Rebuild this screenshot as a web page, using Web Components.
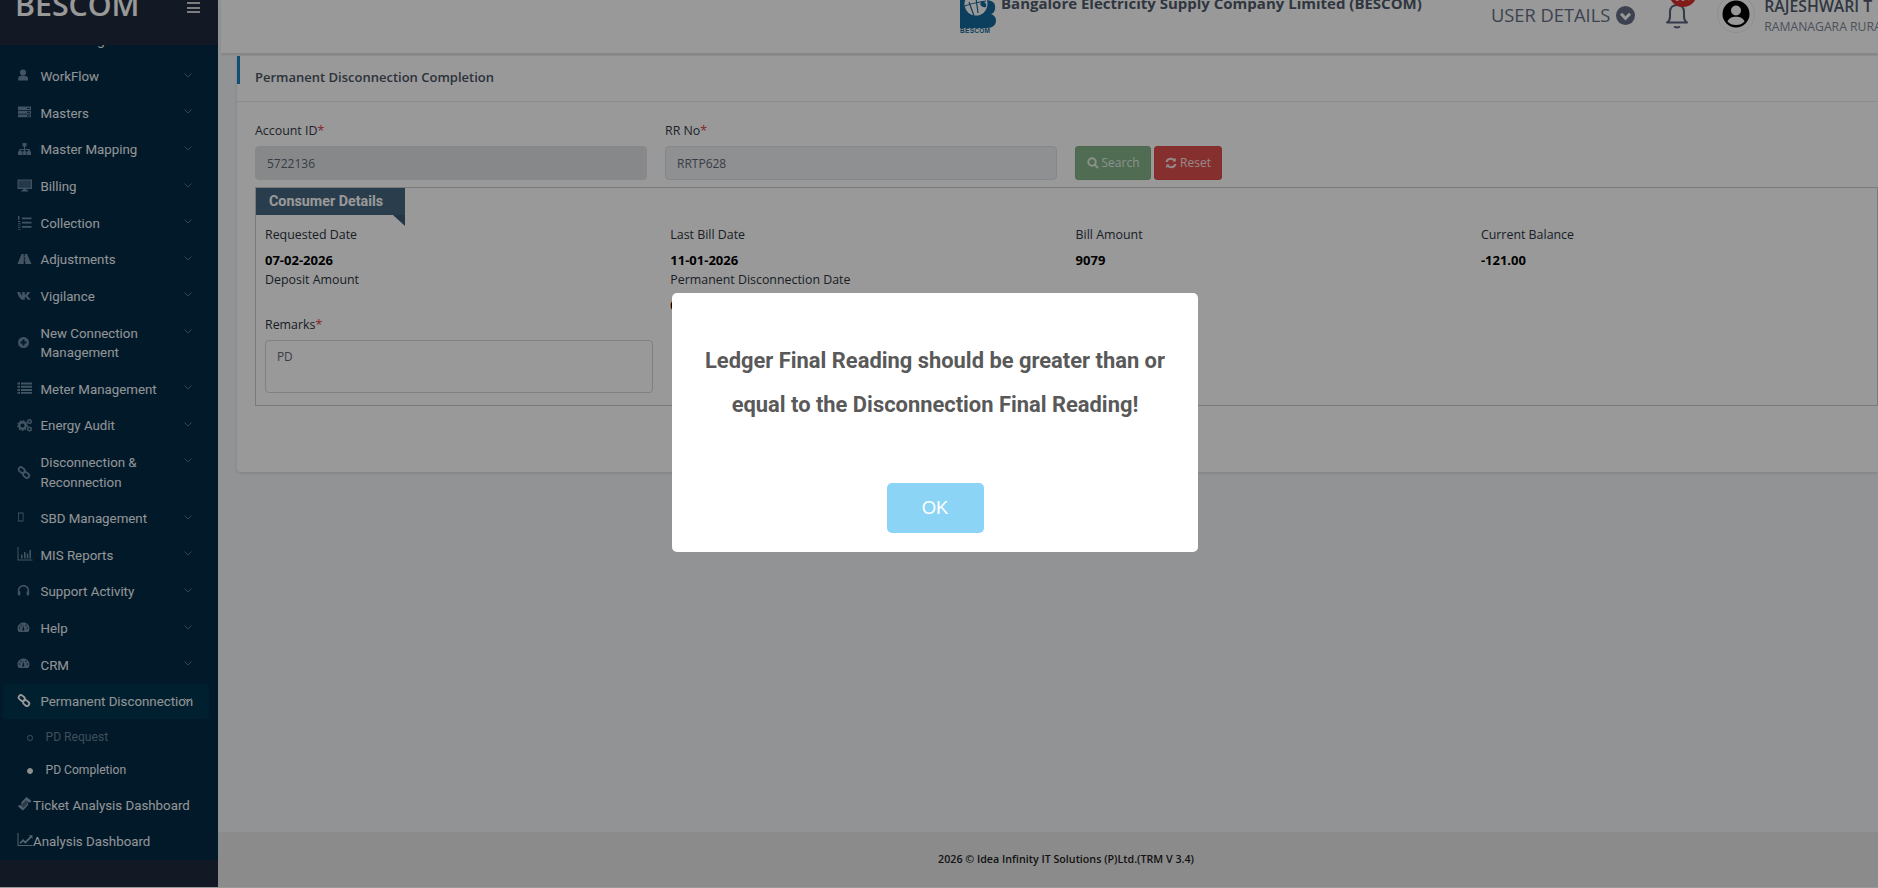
<!DOCTYPE html>
<html lang="en"><head><meta charset="utf-8"><title>Permanent Disconnection Completion</title>
<style>
html,body{margin:0;padding:0;height:100%;overflow:hidden;background:#fff}
body{font-family:"Open Sans","Liberation Sans",sans-serif}
</style></head><body>
<app-shell>
  <side-nav slot="nav"></side-nav>
  <top-bar slot="top"></top-bar>
  <page-card slot="page"></page-card>
  <page-footer slot="footer"></page-footer>
</app-shell>
<alert-modal>Ledger Final Reading should be greater than or equal to the Disconnection Final Reading!</alert-modal>
<script>
const ICONS={
user:'<path d="M6 .5a3.100 3.100 0 1 1 0 6.200A3.100 3.100 0 0 1 6 .5zM1.200 11.500V9.300c0-1.500 1-2.400 2.300-2.400h5C10 6.900 11 7.800 11 9.300v2.200z"/>',
server:'<path d="M1 1.500h13v3.400H1zM1 5.700h13v3H1zM1 9.500h13v2.700H1z" fill-rule="evenodd"/><path d="M10 2.700h3v1h-3zM10 6.700h3v1h-3zM10 10.400h3v1h-3z" fill="#022a45"/>',
sitemap:'<path d="M5.500 1h4v3.500H8v2.500h4.800v2.200h1.200V13h-4V9.200h1.300V8H8v1.200h1.500V13h-4V9.200H7V8H3.700v1.200H5V13H1V9.200h1.300V7H7V4.500H5.500z"/>',
desktop:'<path d="M.500 .500h14.500v9.500H9.500v1.200h1.700v1.300H4.300v-1.300H6V10H.500zM1.700 1.700v6.900h12V1.700z" fill-rule="evenodd"/><path d="M1.700 1.700h12v6.900h-12z" opacity=".55"/>',
listol:'<path d="M5 2.500h9.500v1.800H5zM5 6.700h9.500v1.800H5zM5 10.900h9.500v1.800H5zM1 1h1.400v3.800H1zM1 6h2.500v1H1zM1 8.300h2.500v1H1zM1 10.500h2.500v.8H1zM1 12.300h2.500v.8H1zM1 14h2.500v.8H1z"/>',
road:'<path d="M4.500 2h2.200v2.500h1V2H10l4.500 10H8.200V8.500H6.700V12H.5zM6.700 5.500v2h1.500v-2z" fill-rule="evenodd"/>',
vk:'<path d="M.300 4h2.800c.6 2 1.500 3.400 2.100 3.800V4h2.600v2.900C8.500 6.700 9.500 5.500 10.300 4H13c-.5 1.500-1.600 3-2.700 3.900 1.200.7 2.400 2 3.400 3.900h-3C10 10.300 9 9.300 7.800 9.100v2.700H6.500C3.500 11.800 1 8.500.300 4z"/>',
plus:'<path d="M6.500 2a5.500 5.500 0 1 1 0 11 5.500 5.500 0 0 1 0-11zM5.500 4.500v2H3.500v2h2v2h2v-2h2v-2h-2v-2z" fill-rule="evenodd"/>',
list:'<path d="M.500 1.500h2.500v2H.500zM4 1.500h11v2H4zM.500 4.700h2.500v2H.500zM4 4.700h11v2H4zM.500 7.900h2.500v2H.500zM4 7.900h11v2H4zM.500 11.100h2.500v1.600H.500zM4 11.100h11v1.600H4z"/>',
cogs:'<circle cx="5.500" cy="7.500" r="3.300" fill="none" stroke="currentColor" stroke-width="2.400"/><circle cx="5.500" cy="7.500" r="4.800" fill="none" stroke="currentColor" stroke-width="1.200" stroke-dasharray="1.600 1.600"/><circle cx="12.500" cy="3.500" r="1.800" fill="none" stroke="currentColor" stroke-width="1.400"/><circle cx="12.500" cy="11" r="1.800" fill="none" stroke="currentColor" stroke-width="1.400"/>',
chain:'<g fill="none" stroke="currentColor" stroke-width="1.800"><rect x="1.500" y="2.800" width="6.500" height="4.500" rx="2.200" transform="rotate(40 4.700 5)"/><rect x="6" y="7.800" width="6.500" height="4.500" rx="2.200" transform="rotate(40 9.200 10)"/></g>',
mobile:'<path d="M1 1.500h5.500v9H1zM1.800 2.500v7h3.900v-7z" fill-rule="evenodd"/>',
bar:'<path d="M.500 0h1v12.500h14v1H.500zM4 7.500h1.600v4H4zM7 5h1.600v6.500H7zM9.700 6.500h1.600v5H9.700zM12.400 3H14v8.500h-1.600z"/>',
head:'<path d="M6.500 1c3.300 0 5.700 2.400 5.700 5.700v3.300c0 .8-.5 1.500-1.500 1.500H9.700V7.200h1.100C10.600 4.500 8.900 2.500 6.500 2.500S2.400 4.500 2.200 7.200h1.100v4.300H2.300C1.300 11.500.800 10.800.800 10V6.700C.800 3.400 3.200 1 6.500 1z"/>',
gauge:'<path d="M6.500 1.500c3.300 0 6 2.600 6 5.800 0 1.400-.5 2.700-1.300 3.700H1.800C1 10 .500 8.700.500 7.300c0-3.200 2.700-5.800 6-5.800zM6.100 4 5.600 7.800c-.5.400-.5 1-.2 1.500.4.400 1 .5 1.500.2.500-.4.600-1 .2-1.500z" fill-rule="evenodd"/><circle cx="2.700" cy="7" r=".7" fill="#022a45"/><circle cx="10.300" cy="7" r=".7" fill="#022a45"/><circle cx="4" cy="4.300" r=".7" fill="#022a45"/><circle cx="9" cy="4.300" r=".7" fill="#022a45"/>',
ticket:'<path d="M9.500 1 14.500 5l-1.300 1.500c-.7-.4-1.500-.3-2 .3-.5.600-.4 1.400.1 2L6 14.500 1 10.500l1.200-1.600c.7.500 1.600.4 2.100-.3.500-.6.500-1.500-.1-2z"/><path d="M8.900 4 11.700 6.300 6.600 11.900 3.800 9.600z" fill="#022a45" opacity=".5"/>',
line:'<path d="M.500 1h1v12h14v1H.500zM2.500 11 6 7l2.300 2.200L13 4.500l-1.200-1.200H15.500V7l-1.200-1.200-6 6-2.300-2.300-2.500 2.500z"/>'
};
const ico=(n,s)=>`<svg width="${s||16}" height="${s||16}" viewBox="0 0 16 16" fill="currentColor" aria-hidden="true">${ICONS[n]}</svg>`;
function def(name,css,html){
  customElements.define(name,class extends HTMLElement{
    connectedCallback(){
      if(this.shadowRoot)return;
      this.attachShadow({mode:'open'}).innerHTML=`<style>${css}</style>`+(typeof html==='function'?html(this):html);
    }
  });
}
def('app-shell',`
:host{display:flex;height:887px;width:100%;overflow:hidden;background:#f3f5f8}
.side{flex:0 0 218px;width:218px;height:887px;display:block}
.main{flex:1 1 0;min-width:0;display:flex;flex-direction:column;height:887px}
.body{flex:1 1 0;min-height:0;padding:3px 0 0 19px}
`,`<div class="side"><slot name="nav"></slot></div>
<div class="main"><slot name="top"></slot><div class="body"><slot name="page"></slot></div><slot name="footer"></slot></div>`);

const NAV=[
['Monitoring','gauge'],['WorkFlow','user'],['Masters','server'],['Master Mapping','sitemap'],['Billing','desktop'],['Collection','listol'],['Adjustments','road'],['Vigilance','vk'],['New Connection Management','plus'],['Meter Management','list'],['Energy Audit','cogs'],['Disconnection &amp; Reconnection','chain'],['SBD Management','mobile'],['MIS Reports','bar'],['Support Activity','head'],['Help','gauge'],['CRM','gauge']];
def('side-nav',`
:host{display:flex;flex-direction:column;height:887px;background:#212b3d;font-family:Roboto,"Liberation Sans",sans-serif;color:#f4f7fb}
.brand{flex:0 0 45px;height:45px;overflow:hidden;display:flex;align-items:flex-start;justify-content:space-between;padding:0 18px 0 15px;box-sizing:border-box;position:relative;z-index:1}
.logo{font:600 30.300px/36px "Open Sans","Liberation Sans",sans-serif;color:#fff;margin-top:-13px}
.burger{display:flex;flex-direction:column;gap:2.500px;margin-top:2px}
.burger i{display:block;width:13px;height:2px;background:#d0d0d0}
nav{height:815px;background:#022a45;overflow:hidden;font-size:13.300px;line-height:19.600px}
.r{display:flex;align-items:flex-start;padding:8.530px 0 8.530px 17px;position:relative}
.r:first-child{margin-top:-23px}
.ic{flex:0 0 23.500px;color:#6f8da5;height:16px;display:flex;align-items:flex-start;margin-top:1.500px}
.two .ic{align-self:center;margin-top:0}
.t{width:126px;flex:none}
.c{position:absolute;left:184px;top:14px;width:8px;height:5px;color:#55748a}
.act{margin:0 9px 2.500px 3px;padding:7.700px 0 7.700px 14px;background:#03364f;border-radius:3px;height:19.600px}
.act .ic{color:#fff}.act .t{white-space:nowrap}.act .c{left:181px;top:14px;color:#d8dde2}
.s{display:flex;align-items:center;height:33px;padding-left:27px;font-size:12.100px}
.s b{flex:0 0 18.500px;display:block}.s b::before{content:"";display:block;width:3.500px;height:3.500px;border-radius:50%;border:1px solid #6f8da5}
.s.dim{color:#6a8396}.s.on b::before{background:#eee;border-color:#eee;width:4px;height:4px}
.l{display:flex;align-items:center;height:36.600px;padding-left:17px}
.l .ic{flex:none;margin:2px 0 0 0;height:auto;display:block;color:#8ba3b6}
.l span{display:block}
.foot{flex:1;background:#212b3d}
`,()=>{
 const chev='<svg class="c" viewBox="0 0 8 5" fill="none" stroke="currentColor" stroke-width="1"><path d="M.5.500 4 4 7.500.500"/></svg>';
 const rows=NAV.map(([t,i])=>{
   const two=/New Conn|Disconnection &/.test(t);
   return `<div class="r${two?' two':''}"><span class="ic">${ico(i)}</span><span class="t">${t}</span>${chev}</div>`}).join('');
 return `<div class="brand"><div class="logo">BESCOM</div><div class="burger"><i></i><i></i><i></i></div></div>
 <nav>${rows}
 <div class="r act"><span class="ic">${ico('chain')}</span><span class="t">Permanent Disconnection</span>${chev}</div>
 <div class="s dim"><b></b>PD Request</div>
 <div class="s on"><b></b>PD Completion</div>
 <div class="l"><span class="ic">${ico('ticket')}</span><span>Ticket Analysis Dashboard</span></div>
 <div class="l"><span class="ic">${ico('line')}</span><span>Analysis Dashboard</span></div>
 </nav><div class="foot"></div>`});

def('top-bar',`
:host{display:block;flex:0 0 53px;height:53px;margin-left:3px;background:#fff;box-shadow:0 2px 2px rgba(0,0,0,.1);overflow:hidden;position:relative;z-index:1}
.w{display:flex;align-items:flex-start;padding-left:739px;white-space:nowrap;width:1700px}
.lg{flex:none;width:36px;margin-right:5px;display:flex;flex-direction:column}
.lg span{font:800 6.500px/7px "Liberation Sans",sans-serif;color:#14689b;letter-spacing:.3px;margin-top:-1px}
.ti{font:700 15px/20px "Open Sans",sans-serif;color:#4f5a6b;margin-top:-7px;width:424px;flex:none}
.ud{font:400 18.300px/24px "Open Sans",sans-serif;color:#656f85;margin:3px 6px 0 66px;display:flex;align-items:center;gap:6px}
.ud svg{flex:none}
.bell{flex:none;margin:2px 0 0 24px;width:30px;height:30px;position:relative;color:#56617a}
.bd{position:absolute;left:4px;top:-23px;width:28px;height:28px;border-radius:50%;background:#d9302d;color:#fff;font:700 10px/38px Roboto,sans-serif;text-align:center}
.av{flex:none;margin:-5px 0 0 22px;width:38px;height:38px;border:1px solid #eee;border-radius:50%;box-sizing:border-box;display:flex;align-items:center;justify-content:center}
.who{margin-left:9px;margin-top:-4px}
.n{font:600 15.800px/21px "Open Sans",sans-serif;color:#4f5a6b}
.o{font:400 12.200px/20px "Open Sans",sans-serif;color:#7d8796}
`,`<div class="w">
<div class="lg"><svg width="36" height="28" viewBox="0 0 36 28"><path fill="#14689b" d="M0 0h24c9 0 12 3 11 9-.5 3-2 4.500-4 5 3 1 5 3.500 5 6.500 0 4-3 7.500-9 7.500H0z"/><circle cx="16" cy="4" r="11.500" fill="#fff"/><path d="M5 6c4-2 9-3 21-5M9 2l5 14M16-2l2 15" stroke="#14689b" stroke-width="1.200" fill="none"/><path d="M22 1c3 1 5 3 4 6-3 1-5-1-6-3z" fill="#14689b"/></svg><span>BESCOM</span></div>
<div class="ti">Bangalore Electricity Supply Company Limited (BESCOM)</div>
<div class="ud"><span>USER DETAILS</span><svg width="19" height="19" viewBox="0 0 19 19"><circle cx="9.500" cy="9.500" r="9.500" fill="#656f85"/><path d="M5 7.800l4.500 4.500L14 7.800" fill="none" stroke="#fff" stroke-width="3"/></svg></div>
<div class="bell"><svg width="24" height="27" viewBox="0 0 24 27" fill="none" stroke="currentColor" stroke-width="2"><path d="M2 20.500h20c-2-1.500-3-3-3-5.500V10c0-4.500-3-7-7-7S5 5.500 5 10v5c0 2.500-1 4-3 5.500z" stroke-linejoin="round"/><path d="M9 24.500c1.500 1.200 4.500 1.200 6 0"/></svg><span class="bd">99+</span></div>
<div class="av"><svg width="28" height="28" viewBox="0 0 28 28"><circle cx="14" cy="14" r="13.500" fill="#000"/><circle cx="14" cy="10.500" r="5" fill="#fff"/><path d="M5.500 21.500c1.500-3.500 4.500-4.800 8.500-4.800s7 1.300 8.500 4.800c-2 2.500-5 3.500-8.500 3.500s-6.500-1-8.500-3.500z" fill="#fff"/></svg></div>
<div class="who"><div class="n">RAJESHWARI T</div><div class="o">RAMANAGARA RURAL</div></div>
</div>`);

def('text-field',`
:host{display:block;width:392px;flex:none;font:400 12.400px/20px "Open Sans",sans-serif;color:#333b47}
em{font-style:normal;color:#e53945}
.i{margin-top:5px;height:34px;box-sizing:border-box;border:1px solid #dfe2e7;border-radius:4px;padding:0 11px;font-size:12px;line-height:33px;color:#5e6673;background:#eef0f3}
:host([strong]) .i{background:#e1e3e6;border-color:#e1e3e6}
`,h=>`<div>${h.getAttribute('label')}<em>*</em></div><div class="i">${h.getAttribute('value')}</div>`);

def('info-cell',`
:host{display:block;font:400 12.400px/19px "Open Sans",sans-serif;color:#2c3440}
.v{margin-top:7px;height:19px;font-weight:700;font-size:13px;color:#000}
`,h=>`<div>${h.getAttribute('label')}</div><div class="v">${h.getAttribute('value')||''}</div>`);

def('page-card',`
:host{display:block;background:#fff;box-shadow:0 1px 3px rgba(0,0,0,.12);border-radius:3px 0 0 3px;height:416px;box-sizing:border-box;font-family:"Open Sans",sans-serif}
.h{display:flex;height:45px;border-bottom:1px solid #e8eaee;box-sizing:content-box;align-items:flex-start}
.h i{flex:0 0 3px;height:28px;background:#1a82c4;border-radius:0}
.h h1{margin:11px 0 0 15px;font:600 13px/20px "Open Sans",sans-serif;color:#4a5463}
.b{padding:19px 0 0 18px}
.f{display:flex;gap:18px;align-items:flex-end}
.btns{display:flex;gap:3px}
.bt{height:34px;box-sizing:border-box;border-radius:3px;color:#e8f2e8;font:400 12px/32px "Open Sans",sans-serif;display:flex;align-items:center;justify-content:center;gap:3px;border:1px solid}
.go{width:76px;background:#85b48b;border-color:#7fb086}
.re{width:68px;background:#e04f4f;border-color:#dc4a4a;color:#fbe4e4}
.box{margin-top:7px;border:1px solid #c9cbce;height:218.500px;box-sizing:border-box;position:relative}
.tab{width:149px;height:27px;background:#476780;color:#fff;font:700 14.300px/26px Roboto,sans-serif;padding-left:13px;box-sizing:border-box;position:relative;margin-top:0}
.tab::after{content:"";position:absolute;right:0;top:27px;border-style:solid;border-width:11px 12px 0 0;border-color:#3a5b78 transparent transparent transparent;transform:scaleX(-1)}
.g{display:grid;grid-template-columns:repeat(4,405.300px);padding:9.500px 0 0 9px}
.rem{padding:0 0 0 9px;font:400 12.400px/19px "Open Sans",sans-serif;color:#2c3440}
.rem em{font-style:normal;color:#e53945}
.ta{margin-top:6.500px;width:387.500px;height:53px;box-sizing:border-box;border:1px solid #d3d6da;border-radius:4px;padding:6px 11px;font-size:11.800px;color:#5e6673}
`,`<div class="h"><i></i><h1>Permanent Disconnection Completion</h1></div>
<div class="b">
<div class="f">
<text-field label="Account ID" value="5722136" strong></text-field>
<text-field label="RR No" value="RRTP628"></text-field>
<div class="btns">
<div class="bt go"><svg width="12" height="12" viewBox="0 0 12 12" fill="none" stroke="currentColor" stroke-width="2"><circle cx="5" cy="5" r="3.700"/><path d="M7.800 7.800 11 11"/></svg>Search</div>
<div class="bt re"><svg width="12" height="12" viewBox="0 0 12 12" fill="none" stroke="currentColor" stroke-width="2"><path d="M1.500 5C2 3 3.800 1.800 6 1.800c1.500 0 2.700.6 3.500 1.700M10.500 7c-.5 2-2.300 3.200-4.500 3.200-1.500 0-2.700-.6-3.500-1.700"/><path d="M10.800 .8v3.700H7.100M1.200 11.200V7.500h3.700" fill="currentColor" stroke="none"/></svg>Reset</div>
</div></div>
<div class="box"><div class="tab">Consumer Details</div>
<div class="g">
<info-cell label="Requested Date" value="07-02-2026"></info-cell>
<info-cell label="Last Bill Date" value="11-01-2026"></info-cell>
<info-cell label="Bill Amount" value="9079"></info-cell>
<info-cell label="Current Balance" value="-121.00"></info-cell>
<info-cell label="Deposit Amount"></info-cell>
<info-cell label="Permanent Disconnection Date" value="0"></info-cell>
</div>
<div class="rem">Remarks<em>*</em><div class="ta">PD</div></div>
</div>
</div>`);

def('page-footer',`
:host{display:block;flex:0 0 55px;height:55px;background:#e8e8e8;text-align:center;font:600 10.700px/54px "Open Sans",sans-serif;color:#222;padding-left:36px}
`,`2026 © Idea Infinity IT Solutions (P)Ltd.(TRM V 3.4)`);

def('alert-modal',`
:host{position:fixed;inset:0;background:rgba(0,0,0,.4);z-index:10;display:block}
.m{position:absolute;left:672px;top:293px;width:526px;height:259px;background:#fff;border-radius:5px;box-sizing:border-box;text-align:center;padding-top:46px}
.t{font:700 21.900px/44px Roboto,"Liberation Sans",sans-serif;color:#595959;padding:0 20px}
.ok{display:block;margin:56px auto 0;width:97px;height:50px;line-height:50px;background:#8cd4f5;border-radius:5px;color:#fff;font-family:"Liberation Sans",Arial,sans-serif;font-size:18.500px}
`,`<div class="m"><div class="t"><slot></slot></div><div class="ok">OK</div></div>`);
</script>
</body></html>
